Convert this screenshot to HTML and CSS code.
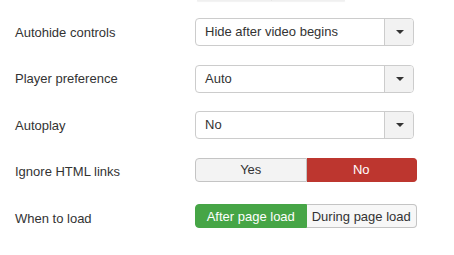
FILE: index.html
```html
<!DOCTYPE html>
<html lang="en">
<head>
    <meta charset="UTF-8">
    <title>Player options</title>
    <link rel="stylesheet" href="styles.css">
</head>
<body>

<div class="prev-group">
    <span></span><span></span>
</div>

<div class="options">
    <div class="row">
        <label class="label">Autohide controls</label>
        <div class="select">
            <span class="select-value">Hide after video begins</span>
            <span class="select-arrow"><i class="caret"></i></span>
        </div>
    </div>

    <div class="row">
        <label class="label">Player preference</label>
        <div class="select">
            <span class="select-value">Auto</span>
            <span class="select-arrow"><i class="caret"></i></span>
        </div>
    </div>

    <div class="row">
        <label class="label">Autoplay</label>
        <div class="select">
            <span class="select-value">No</span>
            <span class="select-arrow"><i class="caret"></i></span>
        </div>
    </div>

    <div class="row">
        <label class="label">Ignore HTML links</label>
        <div class="btn-group">
            <button class="btn">Yes</button>
            <button class="btn btn-danger">No</button>
        </div>
    </div>

    <div class="row">
        <label class="label">When to load</label>
        <div class="btn-group">
            <button class="btn btn-success">After page load</button>
            <button class="btn btn-light">During page load</button>
        </div>
    </div>
</div>

</body>
</html>
```

FILE: styles.css
```css
/* Mise en page de base */
body {
    margin: 0;
    background-color: #ffffff;
    font-family: "Liberation Sans", Arial, sans-serif;
    font-size: 13px;
    color: #333333;
}

/* Bas du groupe de boutons précédent, coupé en haut */
.prev-group {
    display: flex;
    margin-left: 197px;
    width: 148px;
    height: 1px;
}

.prev-group span {
    flex: 1;
    background-color: #f0f0f0;
    box-shadow: 0 1px 1px rgba(0, 0, 0, 0.06);
}

.prev-group span + span {
    border-left: 1px solid #e6e6e6;
}

.options {
    padding: 17px 0 0 15px;
}

.row {
    display: flex;
    align-items: center;
    height: 28px;
    margin-bottom: 18.5px;
}

.label {
    width: 180px;
    flex-shrink: 0;
}

.select {
    display: flex;
    width: 219px;
    height: 28px;
    box-sizing: border-box;
    border: 1px solid #cccccc;
    border-radius: 4px;
    background-color: #ffffff;
    overflow: hidden;
}

.select-value {
    flex: 1;
    padding-left: 9px;
    line-height: 26px;
}

.select-arrow {
    width: 27px;
    display: flex;
    align-items: center;
    justify-content: center;
    padding-left: 1px;
    background-color: #f2f2f2;
    border-left: 1px solid #cccccc;
}

.caret {
    width: 0;
    height: 0;
    border-left: 4px solid transparent;
    border-right: 4px solid transparent;
    border-top: 4px solid #333333;
}

.btn-group {
    display: flex;
    align-self: flex-start;
    width: 222px;
    height: 24px;
}

.btn {
    flex: 1;
    margin: 0;
    padding: 0;
    font-family: inherit;
    font-size: 13px;
    color: #333333;
    background-color: #f3f3f3;
    border: 1px solid #c4c4c4;
    cursor: pointer;
}

.btn:first-child {
    border-radius: 4px 0 0 4px;
}

.btn:last-child {
    border-radius: 0 4px 4px 0;
    border-left: none;
}

.btn-danger {
    background-color: #bd362f;
    border-color: #bd362f;
    color: #ffffff;
}

.btn-success {
    background-color: #46a546;
    border-color: #46a546;
    color: #ffffff;
}

.btn-light {
    background-color: #f7f7f7;
}
```
